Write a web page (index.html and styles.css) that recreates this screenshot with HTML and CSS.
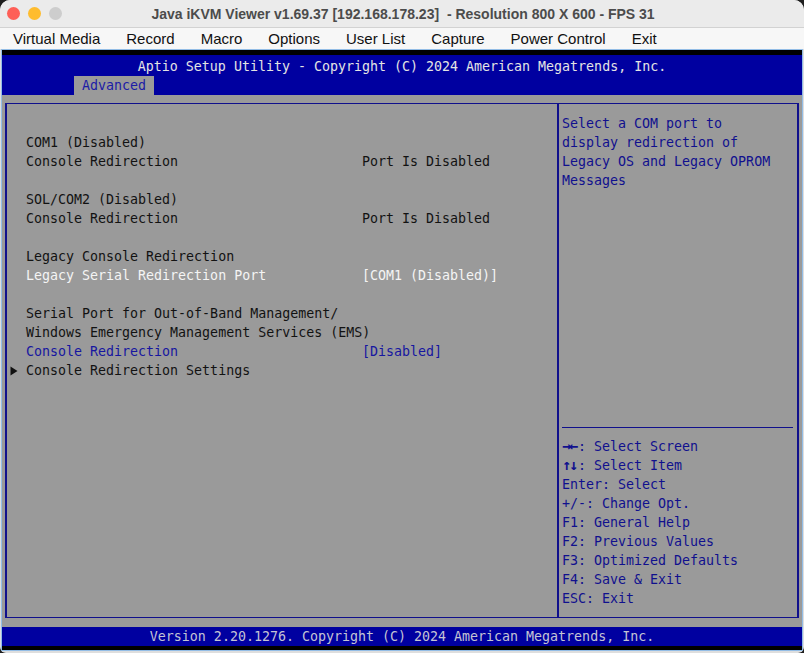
FILE: index.html
```html
<!DOCTYPE html>
<html lang="en">
<head>
    <meta charset="UTF-8">
    <meta name="viewport" content="width=device-width, initial-scale=1.0">
    <title>Java iKVM Viewer</title>
    <link rel="stylesheet" href="styles.css">
</head>
<body>

    <div class="window">
        <div class="titlebar">
            <div class="lights">
                <span class="light red"></span>
                <span class="light yellow"></span>
                <span class="light off"></span>
            </div>
            <div class="title">Java iKVM Viewer v1.69.37 [192.168.178.23]  - Resolution 800 X 600 - FPS 31</div>
        </div>

        <div class="menubar">
            <span>Virtual Media</span>
            <span>Record</span>
            <span>Macro</span>
            <span>Options</span>
            <span>User List</span>
            <span>Capture</span>
            <span>Power Control</span>
            <span>Exit</span>
        </div>

        <div class="pane">
            <div class="screen">
                <div class="hdr">
                    <div class="hdr-title">Aptio Setup Utility - Copyright (C) 2024 American Megatrends, Inc.</div>
                    <div class="tabs"><span class="tab">Advanced</span></div>
                </div>

                <div class="main">
                    <div class="frame">
                        <div class="left">
                            <div class="row"></div>
                            <div class="row">COM1 (Disabled)</div>
                            <div class="row"><span class="lbl">Console Redirection</span><span>Port Is Disabled</span></div>
                            <div class="row"></div>
                            <div class="row">SOL/COM2 (Disabled)</div>
                            <div class="row"><span class="lbl">Console Redirection</span><span>Port Is Disabled</span></div>
                            <div class="row"></div>
                            <div class="row">Legacy Console Redirection</div>
                            <div class="row sel"><span class="lbl">Legacy Serial Redirection Port</span><span>[COM1 (Disabled)]</span></div>
                            <div class="row"></div>
                            <div class="row">Serial Port for Out-of-Band Management/</div>
                            <div class="row">Windows Emergency Management Services (EMS)</div>
                            <div class="row opt"><span class="lbl">Console Redirection</span><span>[Disabled]</span></div>
                            <div class="row">
                                <span class="arrow">
                                    <svg width="8" height="10" viewBox="0 0 8 10"><path d="M0.5 0.5 L7.5 5 L0.5 9.5 Z" fill="#111"/></svg>
                                </span>Console Redirection Settings
                            </div>
                        </div>

                        <div class="right">
                            <div class="help">
                                <div class="row">Select a COM port to</div>
                                <div class="row">display redirection of</div>
                                <div class="row">Legacy OS and Legacy OPROM</div>
                                <div class="row">Messages</div>
                            </div>
                            <div class="keys">
                                <div class="row"><b class="glyph">&rarr;&larr;</b>: Select Screen</div>
                                <div class="row"><b class="glyph">&uarr;&darr;</b>: Select Item</div>
                                <div class="row">Enter: Select</div>
                                <div class="row">+/-: Change Opt.</div>
                                <div class="row">F1: General Help</div>
                                <div class="row">F2: Previous Values</div>
                                <div class="row">F3: Optimized Defaults</div>
                                <div class="row">F4: Save &amp; Exit</div>
                                <div class="row">ESC: Exit</div>
                            </div>
                        </div>
                    </div>
                </div>

                <div class="footer">Version 2.20.1276. Copyright (C) 2024 American Megatrends, Inc.</div>
            </div>
        </div>
    </div>

</body>
</html>
```

FILE: styles.css
```css
body {
    margin: 0;
    background: #1e1e1e;
    font-family: "Liberation Sans", Arial, sans-serif;
}

.window {
    width: 804px;
    height: 653px;
    background: #dedede;
    border-radius: 10px 10px 6px 6px;
    overflow: hidden;
}

/* title bar */
.titlebar {
    position: relative;
    height: 27px;
    background: #ebebeb;
    border-bottom: 1px solid #d2d2d2;
    display: flex;
    align-items: center;
    justify-content: center;
}

.lights {
    position: absolute;
    left: 7px;
    top: 7px;
    display: flex;
    gap: 8px;
}

.light {
    width: 13px;
    height: 13px;
    border-radius: 50%;
}

.red { background: #fe5f57; }
.yellow { background: #febc2e; }
.off { background: #cdcdcd; }

.title {
    font-size: 14px;
    font-weight: bold;
    color: #4c4c4c;
    white-space: pre;
    margin-left: 2px;
}

/* menu bar */
.menubar {
    height: 21px;
    background: #f7f7f7;
    display: flex;
    align-items: center;
    font-size: 15px;
    color: #111;
}

.menubar span {
    padding: 0 13px;
}

/* kvm pane */
.pane {
    margin: 0 1px;
    border: 1px solid #93bde6;
}

.screen {
    width: 800px;
    height: 600px;
    background: #9a9a9a;
    border-top: 5px solid #000;
    border-bottom: 4px solid #000;
    box-sizing: border-box;
    display: flex;
    flex-direction: column;
    font-family: "DejaVu Sans Mono", "Liberation Mono", monospace;
    font-size: 13.3px;
    line-height: 19px;
    color: #121212;
}

.hdr {
    background: #0000a0;
    padding-top: 2px;
    height: 40px;
    box-sizing: border-box;
}

.hdr-title {
    text-align: center;
    color: #e4e4e4;
    white-space: pre;
}

.tabs {
    padding-left: 72px;
    height: 19px;
}

.tab {
    display: inline-block;
    padding: 0 8px;
    background: #9a9a9a;
    color: #1c1ca6;
}

.main {
    padding: 8px 3px 9px 3px;
}

.frame {
    height: 515px;
    box-sizing: border-box;
    border: 1px solid #10108c;
    border-left-width: 2px;
    border-right-width: 2px;
    display: flex;
}

.row {
    height: 19px;
    white-space: pre;
}

.left {
    width: 552px;
    padding: 10px 0 0 19px;
    box-sizing: border-box;
    border-right: 2px solid #10108c;
}

.left .row {
    display: flex;
}

.lbl {
    width: 336px;
    flex: none;
}

.sel {
    color: #f4f4f4;
}

.opt {
    color: #1616a0;
}

.arrow {
    width: 16px;
    margin-left: -16px;
    display: flex;
    align-items: center;
}

.right {
    flex: 1;
    display: flex;
    flex-direction: column;
    color: #10108e;
}

.help {
    padding: 10px 0 0 3px;
}

.keys {
    margin: auto 4px 0 3px;
    border-top: 1px solid #10108c;
    padding: 9px 0;
}

.glyph {
    display: inline-block;
    width: 16px;
    font-size: 15px;
    font-weight: bold;
    letter-spacing: -2px;
    vertical-align: top;
}

.footer {
    height: 19px;
    background: #0000a0;
    color: #c4c4d4;
    text-align: center;
}
```
